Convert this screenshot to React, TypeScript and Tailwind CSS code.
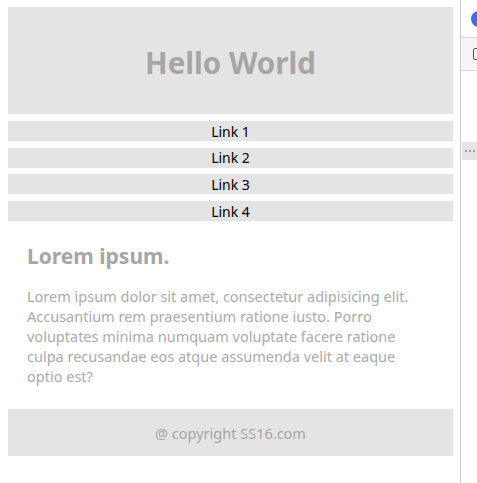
export default function App() {
  const links = ["Link 1", "Link 2", "Link 3", "Link 4"];

  return (
    <div className="flex h-[483px] w-[477px] bg-white font-['Noto_Sans',sans-serif]">
      <div className="ml-[8px] w-[445px] shrink-0">
        <header className="mt-[7px] flex h-[107px] items-center justify-center bg-[#e4e4e4] pt-[5px]">
          <h1 className="text-[29.5px] font-bold text-[#a6a6a6]">Hello World</h1>
        </header>

        <nav className="mt-[7px] flex flex-col gap-[6.7px]">
          {links.map((link) => (
            <a key={link} href="#" className="flex h-[20px] items-center justify-center bg-[#e4e4e4] text-[14px] text-black">
              {link}
            </a>
          ))}
        </nav>

        <section className="px-[19px] pt-[19px] pb-[23px]">
          <h2 className="text-[21px] leading-[32px] font-bold text-[#a6a6a6]">Lorem ipsum.</h2>
          <p className="mt-[14px] text-[14.5px] leading-[20px] text-[#ababab]">
            Lorem ipsum dolor sit amet, consectetur adipisicing elit. Accusantium rem praesentium ratione iusto. Porro voluptates minima numquam voluptate facere ratione culpa recusandae eos atque assumenda velit at eaque optio est?
          </p>
        </section>

        <footer className="flex h-[47px] items-center justify-center bg-[#e4e4e4] pt-[2px] text-[14.5px] text-[#a6a6a6]">
          @ copyright SS16.com
        </footer>
      </div>

      {/* devtools edge */}
      <div className="ml-[7px] flex-1 border-l border-[#cbcbcb]">
        <div className="flex h-[38px] items-center border-b border-[#d6d6d6] pl-[10px]">
          <div className="h-[16px] w-[16px] rounded-full bg-[#3b6ee8]" />
        </div>
        <div className="flex h-[33px] items-center border-b border-[#d6d6d6] bg-[#f5f5f5] pl-[12px]">
          <div className="h-[12px] w-[8px] rounded-[2px] border border-[#555]" />
        </div>
        <div className="mt-[71px] ml-[1px] flex h-[18px] items-center gap-[2px] bg-[#e4e4e4] pl-[3px]">
          <span className="h-[2px] w-[2px] rounded-full bg-[#888]" />
          <span className="h-[2px] w-[2px] rounded-full bg-[#888]" />
          <span className="h-[2px] w-[2px] rounded-full bg-[#888]" />
        </div>
      </div>
    </div>
  );
}
